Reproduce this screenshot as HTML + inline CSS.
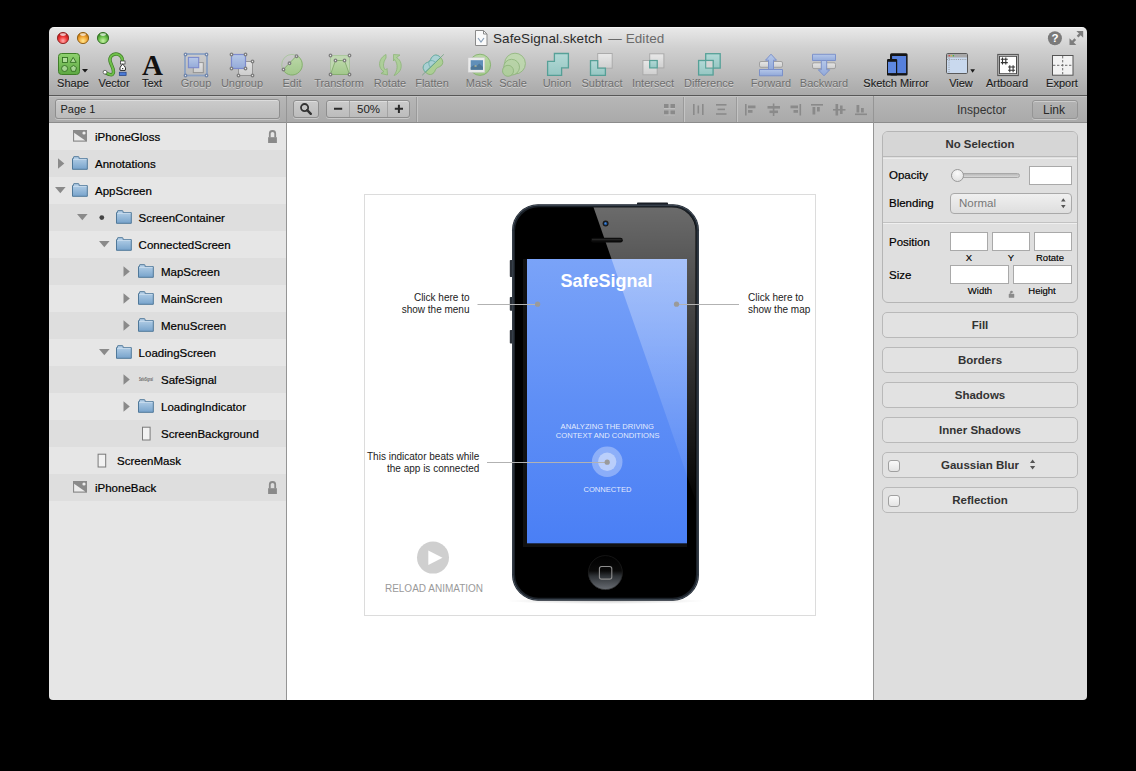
<!DOCTYPE html>
<html><head><meta charset="utf-8">
<style>
*{box-sizing:border-box;margin:0;padding:0}
html,body{width:1136px;height:771px;overflow:hidden;background:#000}
body{position:relative;font-family:"Liberation Sans",sans-serif;}
.a{position:absolute}
#win{position:absolute;left:0;top:0;width:1136px;height:771px;clip-path:inset(27px 49px 71px 49px round 5px 5px 4px 4px);}
#tb{left:49px;top:27px;width:1038px;height:68px;background:linear-gradient(#e8e8e8,#d0d0d0 30%,#a9a9a9 100%);border-top:1px solid #f6f6f6}
#tbl{left:49px;top:95px;width:1038px;height:1px;background:#575757}
#bar{left:49px;top:96px;width:1038px;height:26px;background:linear-gradient(#b6b6b6,#aaaaaa);border-top:1px solid #c4c4c4}
#barl{left:49px;top:122px;width:1038px;height:1px;background:#8c8c8c}
#side{left:49px;top:123px;width:237px;height:577px;background:#e6e6e6}
#sidel{left:286px;top:96px;width:1px;height:604px;background:#959595}
#canvas{left:287px;top:123px;width:586px;height:577px;background:#fff}
#insl{left:873px;top:96px;width:1px;height:604px;background:#959595}
#ins{left:874px;top:123px;width:213px;height:577px;background:#dedede}
.lbl{position:absolute;top:77px;font-size:11px;line-height:13px;color:#1c1c1c;white-space:nowrap;transform:translateX(-50%);text-shadow:0 1px 0 rgba(255,255,255,.45)}
.lbl{-webkit-text-stroke:.15px #1c1c1c}
.dis{color:#6e6e6e;-webkit-text-stroke:0}
.title{left:493px;top:31px;font-size:13.5px;letter-spacing:.08px;line-height:16px;color:#2a2a2a;white-space:nowrap}
.row{position:absolute;left:49px;width:237px;height:27px}
.row.d{background:#dedede}
.row.l{background:#e6e6e6}
.rt{position:absolute;font-size:11.5px;line-height:14px;color:#000;-webkit-text-stroke:.2px #000;white-space:nowrap}
.ib{position:absolute;border:1px solid #a9a9a9;background:#fff}
.btn{position:absolute;left:882px;width:196px;height:26px;border:1px solid #b9b9b9;border-radius:5px;background:#e2e2e2;font-size:11.5px;font-weight:bold;color:#333;text-align:center;line-height:24px}
.il{position:absolute;font-size:11.5px;color:#000;-webkit-text-stroke:.2px #000;white-space:nowrap;line-height:14px}
.sl{position:absolute;font-size:9.5px;color:#000;-webkit-text-stroke:.15px #000;white-space:nowrap;line-height:11px;transform:translateX(-50%)}
.pbtn{border:1px solid #8e8e8e;border-radius:3px;background:linear-gradient(#cbcbcb,#bcbcbc);box-shadow:0 1px 0 rgba(255,255,255,.35), inset 0 1px 0 rgba(255,255,255,.35)}
.ann{position:absolute;font-size:10px;line-height:12px;color:#222;white-space:nowrap}
</style></head><body>
<div id="win">
<div id="tb" class="a"></div>
<div id="tbl" class="a"></div>
<div id="bar" class="a"></div>
<div id="barl" class="a"></div>
<div id="side" class="a"></div>
<div id="canvas" class="a"></div>
<div id="ins" class="a"></div>
<div id="sidel" class="a"></div>
<!--CANVAS-->
<div class="a" style="left:364px;top:194px;width:452px;height:422px;border:1px solid #dcdcdc;background:#fff"></div>
<svg class="a" style="left:0;top:0" width="1136" height="771" viewBox="0 0 1136 771">
<defs>
<linearGradient id="scr" x1="0" y1="0" x2="0" y2="1"><stop offset="0" stop-color="#7aa3f8"/><stop offset=".5" stop-color="#5f8ff6"/><stop offset="1" stop-color="#4a7ff5"/></linearGradient>
<linearGradient id="glare" x1="0" y1="0" x2="0" y2="1"><stop offset="0" stop-color="#fff" stop-opacity=".42"/><stop offset=".5" stop-color="#fff" stop-opacity=".2"/><stop offset="1" stop-color="#fff" stop-opacity="0"/></linearGradient>
<linearGradient id="home" x1="0" y1="0" x2="0" y2="1"><stop offset="0" stop-color="#000"/><stop offset=".45" stop-color="#0a0a0a"/><stop offset=".6" stop-color="#2e3236"/><stop offset="1" stop-color="#6a6e74"/></linearGradient>
<radialGradient id="shad" cx="50%" cy="50%" r="50%"><stop offset="0" stop-color="#000" stop-opacity=".18"/><stop offset="1" stop-color="#000" stop-opacity="0"/></radialGradient>
<clipPath id="phclip"><rect x="515" y="207.3" width="180.5" height="390" rx="23.5"/></clipPath>
</defs>
<ellipse cx="605.5" cy="601" rx="100" ry="3" fill="url(#shad)"/>
<!-- side buttons -->
<rect x="509.8" y="260" width="3" height="17" rx=".8" fill="#2a3038"/>
<rect x="509.8" y="297" width="3" height="13.7" rx=".8" fill="#2a3038"/>
<rect x="509.8" y="330" width="3" height="13.6" rx=".8" fill="#2a3038"/>
<rect x="637" y="202.6" width="31" height="3" rx=".8" fill="#1a1f26"/>
<!-- body -->
<rect x="512" y="204.3" width="187" height="396.4" rx="26" fill="#1b2128"/>
<rect x="512.9" y="205.2" width="185.2" height="394.6" rx="25.2" fill="none" stroke="#4a5562" stroke-width=".9"/>
<rect x="515" y="207.3" width="181" height="390.4" rx="23.5" fill="#000"/>
<!-- screen -->
<rect x="523" y="259" width="164" height="288" fill="#111"/>
<rect x="527" y="259" width="160" height="284.3" fill="url(#scr)"/>
<!-- glare -->
<path d="M593.5 207.3H699V510z" fill="url(#glare)" clip-path="url(#phclip)"/>
<!-- camera & speaker -->
<circle cx="605.6" cy="223.6" r="3" fill="#1a1a1a"/>
<circle cx="605.6" cy="223.6" r="1.6" fill="#1d5aa8"/>
<circle cx="605.3" cy="223.2" r=".6" fill="#6aa0e0"/>
<rect x="590.8" y="237.8" width="32" height="4.8" rx="2.4" fill="#0a0a0a"/>
<rect x="592" y="238.8" width="29.5" height="1.6" fill="#2a2a2a" opacity=".8"/>
<!-- home -->
<circle cx="605.4" cy="572.6" r="17.2" fill="url(#home)"/>
<circle cx="605.4" cy="572.6" r="17" fill="none" stroke="#222" stroke-width=".6"/>
<rect x="599.4" y="566.5" width="12.4" height="12.6" rx="2.2" fill="none" stroke="#8f8f8f" stroke-width="1.1"/>
<!-- screen text -->
<text x="606.5" y="286.5" text-anchor="middle" font-family="Liberation Sans" font-weight="bold" font-size="18" fill="#fff">SafeSignal</text>
<g font-family="Liberation Sans" font-size="7.6" fill="#fff" fill-opacity=".85" text-anchor="middle">
<text x="607.3" y="429">ANALYZING THE DRIVING</text>
<text x="607.7" y="438.2">CONTEXT AND CONDITIONS</text>
<text x="607.5" y="491.8">CONNECTED</text>
</g>
<circle cx="607.2" cy="461.7" r="15.3" fill="#fff" fill-opacity=".32"/>
<circle cx="607.2" cy="461.7" r="9.2" fill="#fff" fill-opacity=".4"/>
<!-- annotation lines -->
<g stroke="#b2b2b2" stroke-width="1">
<path d="M477.5 304.5H537.6M676.5 304.5H739M487 462.5H607.2"/>
</g>
<g fill="#9a9a9a">
<circle cx="537.6" cy="304.2" r="2.6"/><circle cx="676.5" cy="304.2" r="2.6"/><circle cx="607.2" cy="462.2" r="2.6"/>
</g>
<!-- reload -->
<circle cx="433" cy="557.6" r="16" fill="#cfcfcf"/>
<path d="M428.3 550.5L442.5 557.8 428.3 565z" fill="#fff"/>
<text x="434" y="592.3" text-anchor="middle" font-family="Liberation Sans" font-size="10" fill="#9a9a9a">RELOAD ANIMATION</text>
</svg>
<div class="ann" style="left:369px;top:292px;width:100.5px;text-align:right">Click here to<br>show the menu</div>
<div class="ann" style="left:748px;top:292px">Click here to<br>show the map</div>
<div class="ann" style="left:366px;top:451px;width:113.3px;text-align:right">This indicator beats while<br>the app is connected</div>

<!--/CANVAS-->
<!--SIDE-->
<div class="row l" style="top:123px"></div>
<div class="rt" style="left:95px;top:130px">iPhoneGloss</div>
<div class="row d" style="top:150px"></div>
<div class="rt" style="left:95px;top:157px">Annotations</div>
<div class="row l" style="top:177px"></div>
<div class="rt" style="left:95px;top:184px">AppScreen</div>
<div class="row d" style="top:204px"></div>
<div class="rt" style="left:138.6px;top:211px">ScreenContainer</div>
<div class="row l" style="top:231px"></div>
<div class="rt" style="left:138.6px;top:238px">ConnectedScreen</div>
<div class="row d" style="top:258px"></div>
<div class="rt" style="left:161px;top:265px">MapScreen</div>
<div class="row l" style="top:285px"></div>
<div class="rt" style="left:161px;top:292px">MainScreen</div>
<div class="row d" style="top:312px"></div>
<div class="rt" style="left:161px;top:319px">MenuScreen</div>
<div class="row l" style="top:339px"></div>
<div class="rt" style="left:138.6px;top:346px">LoadingScreen</div>
<div class="row d" style="top:366px"></div>
<div class="rt" style="left:161px;top:373px">SafeSignal</div>
<div class="row l" style="top:393px"></div>
<div class="rt" style="left:161px;top:400px">LoadingIndicator</div>
<div class="row d" style="top:420px"></div>
<div class="rt" style="left:161px;top:427px">ScreenBackground</div>
<div class="row l" style="top:447px"></div>
<div class="rt" style="left:117px;top:454px">ScreenMask</div>
<div class="row d" style="top:474px"></div>
<div class="rt" style="left:95px;top:481px">iPhoneBack</div>
<svg class="a" style="left:0;top:0" width="1136" height="771" viewBox="0 0 1136 771"><defs><linearGradient id="fold" x1="0" y1="0" x2="0" y2="1"><stop offset="0" stop-color="#b9d3ea"/><stop offset="1" stop-color="#77a3cb"/></linearGradient></defs>
<rect x="73" y="130" width="14" height="11.7" fill="#8a8a8a"/>
<path d="M74.1 132.8L85.2 140.6H74.1z" fill="#ececec"/>
<circle cx="84" cy="133" r="1.6" fill="#ececec"/>
<path d="M269.8 137.5V133.5Q269.8 131 272.5 131Q275.2 131 275.2 133.5V137.5" fill="none" stroke="#8a8a8a" stroke-width="1.8"/>
<rect x="268.1" y="137.2" width="8.8" height="5.8" fill="#8a8a8a"/>
<path d="M58 158.2L64.3 163.5L58 168.8z" fill="#8a8a8a"/>
<path d="M72.5 169.3V158.6H73.5V157.2Q73.5 156.7 74 156.7H78.5Q79 156.7 79 157.2V158.6H87.3V169.3z" fill="url(#fold)" stroke="#4f7899" stroke-width="1"/>
<path d="M73.2 159.3H86.6" stroke="#d4e4f2" stroke-width=".8"/>
<path d="M55 187H65.6L60.3 193.2z" fill="#8a8a8a"/>
<path d="M72.5 196.3V185.6H73.5V184.2Q73.5 183.7 74 183.7H78.5Q79 183.7 79 184.2V185.6H87.3V196.3z" fill="url(#fold)" stroke="#4f7899" stroke-width="1"/>
<path d="M73.2 186.3H86.6" stroke="#d4e4f2" stroke-width=".8"/>
<path d="M77 214H87.6L82.3 220.2z" fill="#8a8a8a"/>
<path d="M116.5 223.3V212.6H117.5V211.2Q117.5 210.7 118 210.7H122.5Q123 210.7 123 211.2V212.6H131.3V223.3z" fill="url(#fold)" stroke="#4f7899" stroke-width="1"/>
<path d="M117.2 213.3H130.6" stroke="#d4e4f2" stroke-width=".8"/>
<circle cx="101.8" cy="217.6" r="2.4" fill="#444"/>
<path d="M99 241H109.6L104.3 247.2z" fill="#8a8a8a"/>
<path d="M116.5 250.3V239.6H117.5V238.2Q117.5 237.7 118 237.7H122.5Q123 237.7 123 238.2V239.6H131.3V250.3z" fill="url(#fold)" stroke="#4f7899" stroke-width="1"/>
<path d="M117.2 240.3H130.6" stroke="#d4e4f2" stroke-width=".8"/>
<path d="M123.5 266.2L129.8 271.5L123.5 276.8z" fill="#8a8a8a"/>
<path d="M138.5 277.3V266.6H139.5V265.2Q139.5 264.7 140 264.7H144.5Q145 264.7 145 265.2V266.6H153.3V277.3z" fill="url(#fold)" stroke="#4f7899" stroke-width="1"/>
<path d="M139.2 267.3H152.6" stroke="#d4e4f2" stroke-width=".8"/>
<path d="M123.5 293.2L129.8 298.5L123.5 303.8z" fill="#8a8a8a"/>
<path d="M138.5 304.3V293.6H139.5V292.2Q139.5 291.7 140 291.7H144.5Q145 291.7 145 292.2V293.6H153.3V304.3z" fill="url(#fold)" stroke="#4f7899" stroke-width="1"/>
<path d="M139.2 294.3H152.6" stroke="#d4e4f2" stroke-width=".8"/>
<path d="M123.5 320.2L129.8 325.5L123.5 330.8z" fill="#8a8a8a"/>
<path d="M138.5 331.3V320.6H139.5V319.2Q139.5 318.7 140 318.7H144.5Q145 318.7 145 319.2V320.6H153.3V331.3z" fill="url(#fold)" stroke="#4f7899" stroke-width="1"/>
<path d="M139.2 321.3H152.6" stroke="#d4e4f2" stroke-width=".8"/>
<path d="M99 349H109.6L104.3 355.2z" fill="#8a8a8a"/>
<path d="M116.5 358.3V347.6H117.5V346.2Q117.5 345.7 118 345.7H122.5Q123 345.7 123 346.2V347.6H131.3V358.3z" fill="url(#fold)" stroke="#4f7899" stroke-width="1"/>
<path d="M117.2 348.3H130.6" stroke="#d4e4f2" stroke-width=".8"/>
<path d="M123.5 374.2L129.8 379.5L123.5 384.8z" fill="#8a8a8a"/>
<text x="139" y="381" font-family="Liberation Sans" font-weight="bold" font-size="4.8" fill="#666" textLength="14" lengthAdjust="spacingAndGlyphs">SafeSignal</text>
<path d="M123.5 401.2L129.8 406.5L123.5 411.8z" fill="#8a8a8a"/>
<path d="M138.5 412.3V401.6H139.5V400.2Q139.5 399.7 140 399.7H144.5Q145 399.7 145 400.2V401.6H153.3V412.3z" fill="url(#fold)" stroke="#4f7899" stroke-width="1"/>
<path d="M139.2 402.3H152.6" stroke="#d4e4f2" stroke-width=".8"/>
<rect x="142.5" y="427.2" width="7.6" height="12.8" fill="#f2f2f2" stroke="#7a7a7a" stroke-width="1"/>
<rect x="98.1" y="454.2" width="7.6" height="12.8" fill="#f2f2f2" stroke="#7a7a7a" stroke-width="1"/>
<rect x="73" y="481" width="14" height="11.7" fill="#8a8a8a"/>
<path d="M74.1 483.8L85.2 491.6H74.1z" fill="#ececec"/>
<circle cx="84" cy="484" r="1.6" fill="#ececec"/>
<path d="M269.8 488.5V484.5Q269.8 482 272.5 482Q275.2 482 275.2 484.5V488.5" fill="none" stroke="#8a8a8a" stroke-width="1.8"/>
<rect x="268.1" y="488.2" width="8.8" height="5.8" fill="#8a8a8a"/>
</svg>
<!--/SIDE-->
<!--TOOLBAR-->
<!-- traffic lights -->
<svg class="a" style="left:0;top:0" width="1136" height="100" viewBox="0 0 1136 100">
<defs>
<radialGradient id="gr" cx="50%" cy="75%" r="60%"><stop offset="0" stop-color="#ffb0b0"/><stop offset=".6" stop-color="#f03a3a"/><stop offset="1" stop-color="#c01c1c"/></radialGradient>
<radialGradient id="gy" cx="50%" cy="75%" r="60%"><stop offset="0" stop-color="#ffe890"/><stop offset=".6" stop-color="#f3a93a"/><stop offset="1" stop-color="#c77a10"/></radialGradient>
<radialGradient id="gg" cx="50%" cy="75%" r="60%"><stop offset="0" stop-color="#c8f0a8"/><stop offset=".6" stop-color="#72c450"/><stop offset="1" stop-color="#3f8f2a"/></radialGradient>
<linearGradient id="shp" x1="0" y1="0" x2="0" y2="1"><stop offset="0" stop-color="#8fd16f"/><stop offset="1" stop-color="#5da842"/></linearGradient>
<linearGradient id="blu" x1="0" y1="0" x2="0" y2="1"><stop offset="0" stop-color="#b3c8ef"/><stop offset="1" stop-color="#8aa6df"/></linearGradient>
<linearGradient id="teal" x1="0" y1="0" x2="0" y2="1"><stop offset="0" stop-color="#b2dcd9"/><stop offset="1" stop-color="#92c8c4"/></linearGradient>
<linearGradient id="gry" x1="0" y1="0" x2="0" y2="1"><stop offset="0" stop-color="#ececec"/><stop offset="1" stop-color="#d2d2d2"/></linearGradient>
<linearGradient id="lgr" x1="0" y1="0" x2="0" y2="1"><stop offset="0" stop-color="#b8dca0"/><stop offset="1" stop-color="#9ccb80"/></linearGradient>
</defs>
<circle cx="63" cy="38" r="5.6" fill="url(#gr)" stroke="#8a2020" stroke-width=".9"/>
<ellipse cx="63" cy="34.6" rx="3" ry="1.3" fill="#fff" opacity=".7"/>
<circle cx="83" cy="38" r="5.6" fill="url(#gy)" stroke="#8a5a10" stroke-width=".9"/>
<ellipse cx="83" cy="34.6" rx="3" ry="1.3" fill="#fff" opacity=".7"/>
<circle cx="103" cy="38" r="5.6" fill="url(#gg)" stroke="#2f6a20" stroke-width=".9"/>
<ellipse cx="103" cy="34.6" rx="3" ry="1.3" fill="#fff" opacity=".7"/>

<!-- doc icon -->
<path d="M475.5 30.5h8l3.5 3.5v11.5h-11.5z" fill="#fafafa" stroke="#8a8a8a"/>
<path d="M483.5 30.5v3.5h3.5" fill="none" stroke="#8a8a8a"/>
<path d="M478 38l3 4 3-4" fill="none" stroke="#8aa0b8" stroke-width="1.2"/>

<!-- Shape -->
<rect x="58.5" y="53.5" width="21" height="21" rx="3" fill="url(#shp)" stroke="#3f7d28"/>
<g fill="rgba(235,250,228,.45)" stroke="#2f6a1f" stroke-width=".85">
<rect x="62.5" y="57.5" width="5" height="5"/>
<path d="M73.2 57.4l3 5h-6z"/>
<circle cx="64.6" cy="68.5" r="3"/>
<path d="M73.5 65.4l3 2.2-1.1 3.7h-3.8l-1.1-3.7z"/>
</g>
<path d="M82 69h6l-3 3.4z" fill="#1a1a1a"/>

<!-- Vector -->
<path d="M105 72.3C108 74 113 77 113.5 72 114 67 109 63 110 58.5 111 54.5 115 53.5 117.5 54.2 121 55.2 122.6 58 122.6 61.5" fill="none" stroke="#3f7d28" stroke-width="3.4" stroke-linecap="round"/>
<path d="M105 72.3C108 74 113 77 113.5 72 114 67 109 63 110 58.5 111 54.5 115 53.5 117.5 54.2 121 55.2 122.6 58 122.6 61.5" fill="none" stroke="#6fbf4a" stroke-width="2" stroke-linecap="round"/>
<circle cx="105" cy="72.2" r="1.9" fill="#fff" stroke="#444" stroke-width=".7"/>
<rect x="120.5" y="61" width="4.5" height="3" fill="#fff" stroke="#333" stroke-width=".7"/>
<path d="M122.7 64.2C120 66.5 119.5 68.5 120.2 70.4H125.2C126 68.5 125.5 66.5 122.7 64.2z" fill="#fff" stroke="#111" stroke-width=".9"/>
<circle cx="122.7" cy="68.6" r=".7" fill="#111"/>
<rect x="119.3" y="72.2" width="6.8" height="3.4" fill="#4a7ad6" stroke="#223f80" stroke-width=".7"/>

<!-- Text A -->
<text x="152.5" y="75" text-anchor="middle" font-family="Liberation Serif" font-weight="bold" font-size="29" fill="#111">A</text>

<!-- Group -->
<g opacity=".8">
<rect x="185" y="54" width="22" height="21.5" fill="none" stroke="#7f9bc6" stroke-width="1.8"/>
<rect x="193.3" y="62.6" width="10" height="10" fill="url(#gry)" stroke="#8a8a8a"/>
<rect x="188.4" y="57.4" width="10.3" height="10.3" fill="url(#blu)" stroke="#6b7ccf" stroke-width="1.1"/>
<g fill="#f4f4f4" stroke="#5f79a6" stroke-width="1.3">
<circle cx="185.5" cy="54.5" r="1.3"/><circle cx="206.5" cy="54.5" r="1.3"/><circle cx="185.5" cy="75.5" r="1.3"/><circle cx="206.5" cy="75.5" r="1.3"/>
</g>
</g>
<!-- Ungroup -->
<g opacity=".8">
<rect x="238.5" y="61.5" width="14" height="14" fill="url(#gry)" stroke="#8a8a8a"/>
<rect x="231.5" y="54.5" width="14" height="14" fill="url(#blu)" stroke="#6b7ccf" stroke-width="1.2"/>
<g fill="#f4f4f4" stroke="#6e6e6e" stroke-width="1.3">
<circle cx="231.5" cy="54.5" r="1.3"/><circle cx="245.5" cy="54.5" r="1.3"/><circle cx="231.5" cy="68.5" r="1.3"/><circle cx="245.5" cy="68.5" r="1.3"/>
<circle cx="252.5" cy="61.5" r="1.3"/><circle cx="238.5" cy="75.5" r="1.3"/><circle cx="252.5" cy="75.5" r="1.3"/>
</g>
</g>
<!-- Edit -->
<g opacity=".8">
<circle cx="292" cy="64.7" r="10.3" fill="none" stroke="#9cc48a" stroke-width=".8"/>
<path d="M283 69.8L296.8 55.6A10.3 10.3 0 1 1 283 69.8z" fill="url(#lgr)" stroke="#7aac5e" stroke-width="1"/>
<g fill="#f4f4f4" stroke="#6e6e6e" stroke-width="1.3"><circle cx="283.5" cy="69.5" r="1.3"/><circle cx="289.5" cy="63.3" r="1.3"/><circle cx="296.5" cy="56.2" r="1.3"/></g>
</g>
<!-- Transform -->
<g opacity=".8">
<rect x="330.5" y="55.5" width="19" height="19" fill="#bfdcad" stroke="#9cc48a" stroke-width=".8"/>
<path d="M335.5 60.5h9l5 14h-19z" fill="url(#lgr)" stroke="#7aac5e" stroke-width="1"/>
<g fill="#f4f4f4" stroke="#6e6e6e" stroke-width="1.3"><circle cx="330.5" cy="55.5" r="1.3"/><circle cx="349.5" cy="55.5" r="1.3"/><circle cx="330.5" cy="74.5" r="1.3"/><circle cx="349.5" cy="74.5" r="1.3"/><circle cx="335.5" cy="60.5" r="1.3"/><circle cx="344.5" cy="60.5" r="1.3"/></g>
</g>
<!-- Rotate -->
<g opacity=".8" fill="#a8d190" stroke="#80b266" stroke-width=".8">
<path d="M386 54.5C381 57 378.5 62 380 67 381 69.5 382.5 71 384 71.5L381 73.5 387.5 75 387 68.5 385.5 70C383 68 382.5 63 386 58z"/>
<path d="M393.5 54.5L400 55 396.5 57.5C401 60 402.5 66 400 70.5 398.5 73 396 75 394 75.5 397.5 71 398.5 64 394.5 59.5L393.5 61z"/>
</g>
<!-- Flatten -->
<g opacity=".85" transform="translate(433 64.8) rotate(-44)">
<path d="M-10.5,0 C-10.5,-6.8 -5,-7 -2.5,-5.6 C-1,-4.8 1,-4.8 2.5,-5.6 C5,-7 10.5,-6.8 10.5,0 C10.5,6.8 5,7 2.5,5.6 C1,4.8 -1,4.8 -2.5,5.6 C-5,7 -10.5,6.8 -10.5,0z" fill="#a9d28e" stroke="#80b266" stroke-width=".9"/>
<path d="M-10.5,0 C-10.5,-6.8 -5,-7 -2.5,-5.6 C-1,-4.8 1,-4.8 2.5,-5.6 C5,-7 10.5,-6.8 10.5,0z" fill="#a7d3d6" stroke="#5aa8a8" stroke-width=".9"/>
<path d="M-15,0H15" stroke="#5a9a70" stroke-width=".7"/>
<path d="M-3.5,0C-3.5,-2.5 -2,-4.6 0,-5.2C2,-4.6 3.5,-2.5 3.5,0" fill="none" stroke="#5aa8a8" stroke-width=".8"/>
</g>
<!-- Mask -->
<g opacity=".85">
<circle cx="480" cy="64.8" r="10.6" fill="url(#lgr)" stroke="#80b266" stroke-width="1"/>
<rect x="468" y="57.6" width="16.8" height="14.8" fill="#f2f2f2" stroke="#c8c8c8" stroke-width=".5"/>
<rect x="470.7" y="60.2" width="12.3" height="9.5" fill="#4f86b8"/>
<path d="M470.7 69.7v-2.5l3-2 2.5 1.2 3-3 3.8 3.5v2.8z" fill="#3a6a90"/>
<ellipse cx="475.5" cy="66" rx="1.2" ry=".6" fill="#f0d070"/>
</g>
<!-- Scale -->
<g opacity=".75" stroke="#80b266" stroke-width=".9">
<circle cx="515" cy="63.6" r="10.4" fill="#bcdca8"/>
<circle cx="511.6" cy="67.2" r="7.9" fill="#b4d89e"/>
<circle cx="508" cy="70.8" r="5.5" fill="#acd494"/>
</g>
<!-- Union -->
<g opacity=".9">
<path d="M547.6 61.4h6.8v-7.9h14v14.3h-6.8v7.6h-14z" fill="url(#teal)" stroke="#4b9d93" stroke-width="1.3"/>
</g>
<!-- Subtract -->
<g opacity=".9">
<rect x="597.7" y="53.5" width="14.5" height="14.7" fill="url(#gry)" stroke="#a8a8a8"/>
<path d="M590.5 60.7h7.2v7.5h7.7v7.2h-14.9z" fill="url(#teal)" stroke="#4b9d93" stroke-width="1.3"/>
</g>
<!-- Intersect -->
<g opacity=".9">
<rect x="649.7" y="53.8" width="14.2" height="14.1" fill="url(#gry)" stroke="#a8a8a8"/>
<rect x="642.9" y="60.5" width="14.3" height="14.3" fill="url(#gry)" stroke="#a8a8a8"/>
<rect x="649.7" y="60.5" width="7.5" height="7.4" fill="url(#teal)" stroke="#4b9d93" stroke-width="1.2"/>
</g>
<!-- Difference -->
<g opacity=".9">
<rect x="705.7" y="53.7" width="14.5" height="14.4" fill="url(#teal)" stroke="#4b9d93" stroke-width="1.3"/>
<rect x="698.6" y="60.5" width="14.5" height="14.5" fill="url(#teal)" stroke="#4b9d93" stroke-width="1.3"/>
<rect x="705.7" y="60.5" width="7.4" height="7.6" fill="#d8d8d8" stroke="#4b9d93" stroke-width="1.1"/>
</g>
<!-- Forward -->
<g opacity=".85">
<rect x="759.5" y="61.5" width="23" height="5.8" rx="1.5" fill="url(#gry)" stroke="#9a9a9a"/>
<path d="M759.5 69.5h23v6.3h-23z" fill="url(#blu)" stroke="#7089cc"/>
<path d="M768.5 69.5v-9.3h-3l5.5-6 5.5 6h-3v9.3z" fill="url(#blu)" stroke="#7089cc"/>
</g>
<!-- Backward -->
<g opacity=".85">
<rect x="812.5" y="62.8" width="23" height="5.8" rx="1.5" fill="url(#gry)" stroke="#9a9a9a"/>
<path d="M812.5 54.3h23v6.2h-23z" fill="url(#blu)" stroke="#7089cc"/>
<path d="M821.3 60.5v9.3h-3l5.7 6 5.7-6h-3v-9.3z" fill="url(#blu)" stroke="#7089cc"/>
</g>
<!-- Sketch Mirror -->
<rect x="890" y="53.2" width="17.6" height="22.4" rx="1.5" fill="#151515"/>
<rect x="892.1" y="56" width="14" height="17.1" fill="#5680dc"/>
<rect x="887" y="58.9" width="10.2" height="16.7" rx="1.2" fill="#151515"/>
<rect x="888" y="61.8" width="8" height="11.3" fill="#5e88e0"/>
<!-- View -->
<rect x="946.5" y="53.5" width="21" height="20" rx="1.2" fill="#c9d9ee" stroke="#5a5a5a"/>
<rect x="947" y="54" width="20" height="3.5" fill="#a8a8a8"/>
<circle cx="949.2" cy="55.7" r=".7" fill="#d33"/><circle cx="951.3" cy="55.7" r=".7" fill="#db3"/><circle cx="953.4" cy="55.7" r=".7" fill="#3b3"/>
<path d="M947 59.5h20M949 58v15" stroke="#8a8a8a" stroke-width=".8" stroke-dasharray="1 1.2"/>
<path d="M970.3 69.3h4.7l-2.35 3.4z" fill="#1a1a1a"/>
<!-- Artboard -->
<rect x="997.8" y="54.5" width="20.5" height="21" fill="#d9d9d9" stroke="#5a5a5a" stroke-width="1.2"/>
<rect x="999.5" y="56.3" width="17" height="17.4" fill="#fff" stroke="#4a4a4a" stroke-width="1"/>
<path d="M1002.5 57.5v7M1005.8 57.5v7M1000.8 59.3h7M1000.8 62.6h7M1009.8 65.2v7M1013.1 65.2v7M1008.1 67h7M1008.1 70.3h7" stroke="#333" stroke-width="1.1"/>
<!-- Export -->
<rect x="1052.5" y="55.5" width="20.5" height="19.7" fill="#f2f2f2" stroke="#555" stroke-width="1"/>
<path d="M1062.7 56v19M1053 65.3h20" stroke="#6a6a6a" stroke-width="1" stroke-dasharray="2.4 1.6"/>
<!-- help -->
<circle cx="1054.9" cy="38.2" r="7" fill="#7a7a7a"/>
<text x="1054.9" y="42.4" text-anchor="middle" font-family="Liberation Sans" font-weight="bold" font-size="11.5" fill="#fff">?</text>
<!-- fullscreen -->
<g fill="#7d7d7d" stroke="#7d7d7d">
<path d="M1069.5 45V38.2L1076.3 45z" stroke="none"/>
<path d="M1083.2 31V37.8L1076.4 31z" stroke="none"/>
<path d="M1072 42.5L1075.3 39.2M1077.6 36.6L1080.8 33.4" stroke-width="2.4"/>
</g>
</svg>
<div class="a title">SafeSignal.sketch <span style="color:#6a6a6a;margin-left:2px">— Edited</span></div>
<div class="lbl" style="left:73px">Shape</div>
<div class="lbl" style="left:114px">Vector</div>
<div class="lbl" style="left:152px">Text</div>
<div class="lbl dis" style="left:196px">Group</div>
<div class="lbl dis" style="left:242px">Ungroup</div>
<div class="lbl dis" style="left:292px">Edit</div>
<div class="lbl dis" style="left:339px">Transform</div>
<div class="lbl dis" style="left:390px">Rotate</div>
<div class="lbl dis" style="left:432px">Flatten</div>
<div class="lbl dis" style="left:479px">Mask</div>
<div class="lbl dis" style="left:513px">Scale</div>
<div class="lbl dis" style="left:557px">Union</div>
<div class="lbl dis" style="left:602px">Subtract</div>
<div class="lbl dis" style="left:653px">Intersect</div>
<div class="lbl dis" style="left:709px">Difference</div>
<div class="lbl dis" style="left:771px">Forward</div>
<div class="lbl dis" style="left:824px">Backward</div>
<div class="lbl" style="left:896px">Sketch Mirror</div>
<div class="lbl" style="left:961px">View</div>
<div class="lbl" style="left:1007px">Artboard</div>
<div class="lbl" style="left:1062px">Export</div>

<!--/TOOLBAR-->
<!--BAR-->
<div class="a pbtn" style="left:55px;top:99px;width:225px;height:20px"></div>
<div class="a" style="left:60.5px;top:101px;font-size:11px;line-height:16px;color:#222">Page 1</div>
<div class="a pbtn" style="left:293px;top:100px;width:26px;height:18px"></div>

<div class="a pbtn" style="left:326px;top:100px;width:84px;height:18px"></div>
<div class="a" style="left:349px;top:101px;width:1px;height:16px;background:#a3a3a3"></div>
<div class="a" style="left:387px;top:101px;width:1px;height:16px;background:#a3a3a3"></div>
<div class="a" style="left:357px;top:101px;font-size:11.5px;line-height:16px;color:#222">50%</div>
<div class="a" style="left:416px;top:97px;width:1px;height:25px;background:#9a9a9a;box-shadow:1px 0 0 #c4c4c4"></div>
<div class="a" style="left:683px;top:97px;width:1px;height:25px;background:#9a9a9a;box-shadow:1px 0 0 #c4c4c4"></div>
<div class="a" style="left:736px;top:97px;width:1px;height:25px;background:#9a9a9a;box-shadow:1px 0 0 #c4c4c4"></div>
<div class="a" style="left:957px;top:103px;font-size:12px;line-height:14px;color:#333">Inspector</div>
<div class="a pbtn" style="left:1032px;top:100px;width:46px;height:19px;background:linear-gradient(#b3b3b3,#a9a9a9);border-color:#959595"></div>
<div class="a" style="left:1043px;top:103px;font-size:12px;line-height:14px;color:#2a2a2a">Link</div>

<svg class="a" style="left:0;top:90px" width="1136" height="40" viewBox="0 90 1136 40">
<circle cx="304.6" cy="107.6" r="3.6" fill="none" stroke="#333" stroke-width="1.8"/>
<path d="M307.2 110.2l3.6 3.6" stroke="#333" stroke-width="2.4" stroke-linecap="round"/>
<path d="M334 108.8h8.2M394.8 108.8h8.2M398.9 104.7v8.2" stroke="#2a2a2a" stroke-width="2"/>
<g fill="#8a8a8a">
<!-- grid icon -->
<rect x="664" y="104" width="4.5" height="4"/><rect x="670.5" y="104" width="4.5" height="4"/><rect x="664" y="110.5" width="4.5" height="4"/><rect x="670.5" y="110.5" width="4.5" height="4"/>
<!-- distribute v -->
<rect x="693" y="104" width="1.6" height="11"/><rect x="697.5" y="105.5" width="1.6" height="8"/><rect x="702" y="104" width="1.6" height="11"/>
<!-- distribute h -->
<rect x="716" y="104" width="10.5" height="1.6"/><rect x="717.5" y="108.6" width="7.5" height="1.6"/><rect x="716" y="113.2" width="10.5" height="1.6"/>
<!-- align left -->
<rect x="745" y="104" width="1.6" height="11.5"/><rect x="748" y="105.5" width="7.5" height="2.8"/><rect x="748" y="110" width="4.5" height="2.8"/>
<!-- align center h -->
<rect x="772.8" y="103.5" width="1.6" height="12.5"/><rect x="767.5" y="106" width="12.5" height="2.6"/><rect x="769.5" y="110.5" width="8.5" height="2.6"/>
<!-- align right -->
<rect x="799.5" y="104" width="1.6" height="11.5"/><rect x="790.5" y="105.5" width="7.5" height="2.8"/><rect x="793.5" y="110" width="4.5" height="2.8"/>
<!-- align top -->
<rect x="811" y="104" width="12" height="1.6"/><rect x="812.5" y="107" width="2.8" height="7.5"/><rect x="817" y="107" width="2.8" height="4.5"/>
<!-- align middle -->
<rect x="833" y="109" width="12.5" height="1.6"/><rect x="835.5" y="104" width="2.6" height="11.5"/><rect x="840" y="105.5" width="2.6" height="8.5"/>
<!-- align bottom -->
<rect x="855" y="113.5" width="12" height="1.6"/><rect x="856.5" y="105" width="2.8" height="7.5"/><rect x="861" y="108" width="2.8" height="4.5"/>
</g>
<g fill="#d0d0d0" opacity=".6">
<rect x="664" y="108" width="11" height=".8"/><rect x="664" y="114.5" width="11" height=".8"/>
</g>
</svg>
<!--/BAR-->
<!--INSP-->
<div class="a" style="left:882px;top:131px;width:196px;height:172px;border:1px solid #b5b5b5;border-radius:6px;background:#dfdfdf;overflow:hidden">
  <div class="a" style="left:0;top:0;width:194px;height:24.5px;background:#d6d6d6;border-bottom:1px solid #b9b9b9"></div>
  <div class="a" style="left:0;top:25.5px;width:194px;height:1px;background:#ececec"></div>
  <div class="a" style="left:0;top:90px;width:194px;height:1px;background:#c2c2c2;box-shadow:0 1px 0 #efefef"></div>
</div>
<div class="a" style="left:882px;top:137px;width:196px;text-align:center;font-size:11.4px;font-weight:bold;color:#333;line-height:14px">No Selection</div>
<div class="il" style="left:889px;top:168px">Opacity</div>
<div class="il" style="left:889px;top:196px">Blending</div>
<div class="il" style="left:889px;top:235px">Position</div>
<div class="il" style="left:889px;top:268px">Size</div>
<div class="a" style="left:951px;top:173px;width:69px;height:5px;border-radius:3px;background:linear-gradient(#b8b8b8,#d8d8d8);border:1px solid #a8a8a8"></div>
<div class="a" style="left:951px;top:169px;width:13px;height:13px;border-radius:50%;background:radial-gradient(circle at 50% 30%,#fafafa,#dcdcdc);border:1px solid #9a9a9a"></div>
<div class="ib" style="left:1029px;top:166px;width:43px;height:19px"></div>
<div class="a" style="left:950px;top:193px;width:122px;height:21px;border:1px solid #a9a9a9;border-radius:4px;background:linear-gradient(#f0f0f0,#dedede)"></div>
<div class="a" style="left:959px;top:196px;font-size:11.5px;line-height:14px;color:#777">Normal</div>

<div class="ib" style="left:950px;top:232px;width:38px;height:19px"></div>
<div class="ib" style="left:992px;top:232px;width:38px;height:19px"></div>
<div class="ib" style="left:1034px;top:232px;width:38px;height:19px"></div>
<div class="sl" style="left:969px;top:252px">X</div>
<div class="sl" style="left:1011px;top:252px">Y</div>
<div class="sl" style="left:1050px;top:252px">Rotate</div>
<div class="ib" style="left:950px;top:265px;width:59px;height:19px"></div>
<div class="ib" style="left:1013px;top:265px;width:59px;height:19px"></div>
<div class="sl" style="left:980px;top:285px">Width</div>
<div class="sl" style="left:1042px;top:285px">Height</div>
<div class="btn" style="top:312px">Fill</div>
<div class="btn" style="top:347px">Borders</div>
<div class="btn" style="top:382px">Shadows</div>
<div class="btn" style="top:417px">Inner Shadows</div>
<div class="btn" style="top:452px">Gaussian Blur</div>
<div class="btn" style="top:487px">Reflection</div>
<div class="a" style="left:888px;top:459.5px;width:12px;height:12px;border:1px solid #a0a0a0;border-radius:3px;background:linear-gradient(#fafafa,#e4e4e4)"></div>
<div class="a" style="left:888px;top:494.5px;width:12px;height:12px;border:1px solid #a0a0a0;border-radius:3px;background:linear-gradient(#fafafa,#e4e4e4)"></div>

<svg class="a" style="left:0;top:0" width="1136" height="771" viewBox="0 0 1136 771">
<path d="M1061 201.5l2.3-3.3 2.3 3.3zM1061 205l2.3 3.3 2.3-3.3z" fill="#555"/>
<path d="M1030 463l2.6-3.6 2.6 3.6zM1030 466l2.6 3.6 2.6-3.6z" fill="#555"/>
<path d="M1009 297.5v-3.4h5v3.4zM1010.2 294v-1.6q0-1.4 1.3-1.4 1.3 0 1.3 1.4" fill="#8a8a8a" stroke="#8a8a8a" stroke-width=".5"/>
</svg>
<!--/INSP-->
<div id="insl" class="a"></div>
</div>
</body></html>
